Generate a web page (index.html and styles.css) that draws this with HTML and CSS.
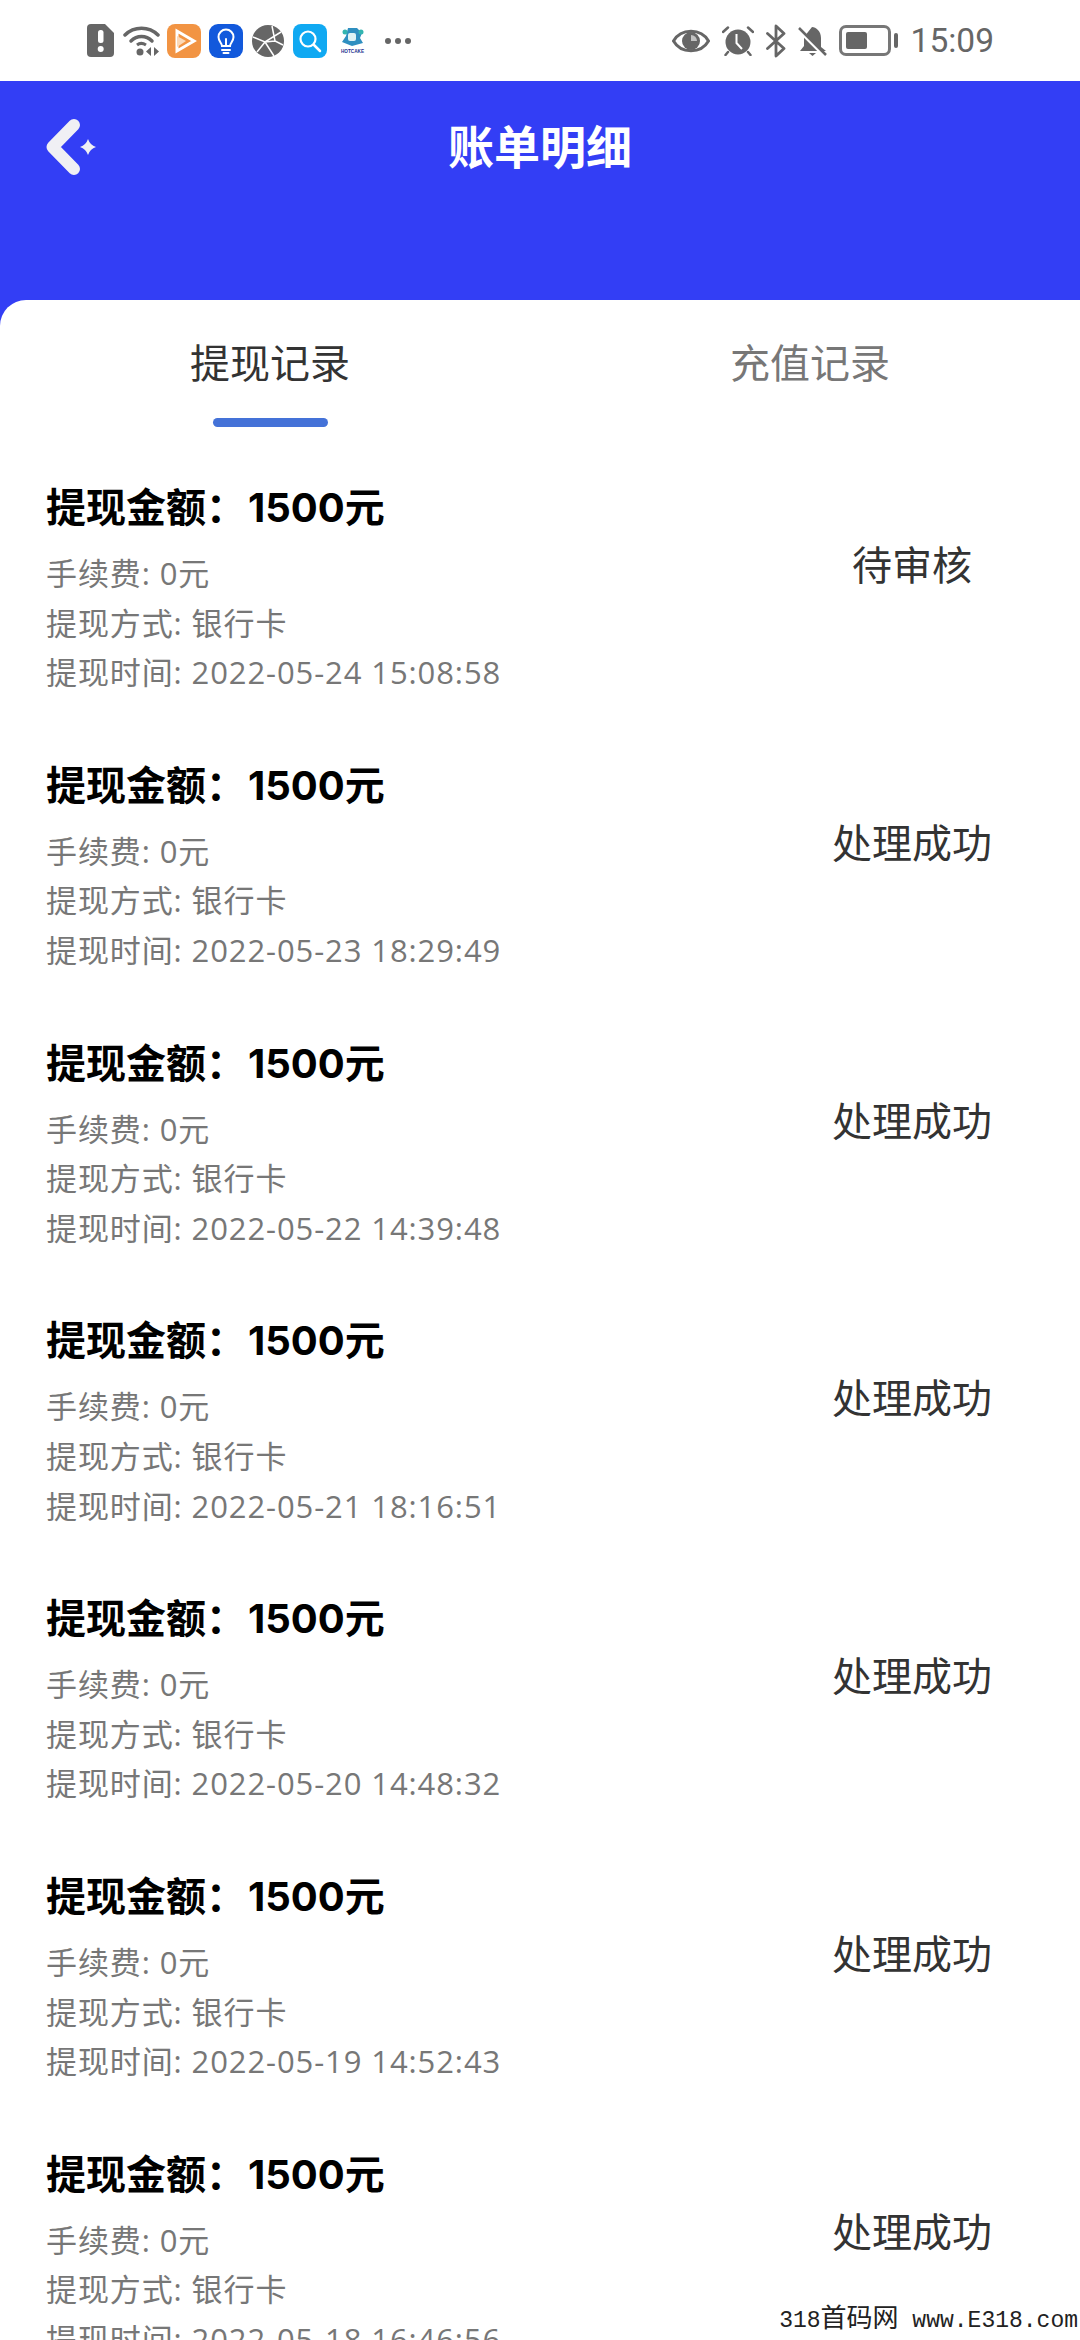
FILE: index.html
```html
<!DOCTYPE html>
<html lang="zh-CN">
<head>
<meta charset="utf-8">
<title>账单明细</title>
<link rel="stylesheet" href="styles.css">
</head>
<body>
<div class="page">
  <div class="statusbar">
    <div class="status-left">
      <span class="cell"><svg width="27" height="33" viewBox="0 0 27 33"><path d="M4 0H18L27 9V29a4 4 0 0 1-4 4H4a4 4 0 0 1-4-4V4a4 4 0 0 1 4-4Z" fill="#666"/><rect x="11" y="6" width="5.500" height="13" rx="2.500" fill="#fff"/><circle cx="13.700" cy="25" r="3" fill="#fff"/></svg></span>
      <span class="cell"><svg width="38" height="33" viewBox="0 0 38 33"><g fill="none" stroke="#666" stroke-width="3.500" stroke-linecap="round"><path d="M2 11C11 2 26 2 35 11"/><path d="M8 17C14 11 23 11 29 17"/></g><path d="M14 21C16.500 19 20 19 23 21" fill="none" stroke="#666" stroke-width="3"/><circle cx="17" cy="28" r="3.500" fill="#666"/><path d="M28 23V32L23 27.500ZM31 23V32L36 27.500Z" fill="#666"/></svg></span>
      <span class="cell"><svg width="34" height="34" viewBox="0 0 34 34"><rect width="34" height="34" rx="8" fill="#f29443"/><path d="M10 7V27L27 17Z" fill="none" stroke="#fff" stroke-width="3"/><path d="M10 12L19 17L10 23Z" fill="#fbd9b8"/></svg></span>
      <span class="cell"><svg width="34" height="34" viewBox="0 0 34 34"><rect width="34" height="34" rx="9" fill="#1259dc"/><path d="M13 22C13 19 9.500 17.500 9.500 13A7.500 7.500 0 0 1 24.500 13C24.500 17.500 21 19 21 22Z" fill="none" stroke="#fff" stroke-width="2"/><path d="M13 26H21M14.500 29H19.500M17 22V15" stroke="#fff" stroke-width="2" stroke-linecap="round"/></svg></span>
      <span class="cell"><svg width="32" height="32" viewBox="0 0 32 32"><circle cx="16" cy="16" r="16" fill="#666"/><path d="M1 12L13 17L29 7M13 17L5 27M13 17L22 31M20 1L23 16L31 20M23 16L13 17" fill="none" stroke="#fff" stroke-width="1.500"/></svg></span>
      <span class="cell"><svg width="34" height="34" viewBox="0 0 34 34"><rect width="34" height="34" rx="8" fill="#10a9f2"/><circle cx="15" cy="15" r="7.500" fill="none" stroke="#fff" stroke-width="2.200"/><path d="M21 21L27 27" stroke="#fff" stroke-width="2.500" stroke-linecap="round"/></svg></span>
      <span class="cell"><svg width="25" height="28" viewBox="0 0 25 28"><path d="M8 1H17L22 6L20 11L23 16L12 19L2 15L6 9Z" fill="#2f8fc0"/><circle cx="5" cy="5" r="2.500" fill="#33b5b0"/><circle cx="21" cy="5" r="2.500" fill="#33b5b0"/><rect x="8" y="6" width="8" height="8" rx="2" fill="#dff3f5"/><text x="12.500" y="26" class="mini" text-anchor="middle" textLength="23" lengthAdjust="spacingAndGlyphs">HOTCAKE</text></svg></span>
      <span class="dots"><i></i><i></i><i></i></span>
    </div>
    <div class="status-right">
      <svg width="38" height="24" viewBox="0 0 38 24"><path d="M1.500 12C9 -1 29 -1 36.500 12C29 25 9 25 1.500 12Z" fill="none" stroke="#666" stroke-width="3"/><circle cx="19" cy="12" r="9" fill="#666"/><path d="M19 6A6 6 0 0 1 25 12H19Z" fill="#fff" opacity=".6"/></svg>
      <svg width="32" height="30" viewBox="0 0 32 30"><circle cx="16" cy="16" r="12.500" fill="#666"/><path d="M14.500 8V17L20 23" fill="none" stroke="#fff" stroke-width="2"/><path d="M1 6L6 1.500M31 6L26 1.500M6 26L3.500 29M26 26L28.500 29" stroke="#666" stroke-width="2.500" stroke-linecap="round"/></svg>
      <svg width="20" height="34" viewBox="0 0 20 34"><path d="M1.500 9.500L18 24.500L10 32V2L18 9.500L1.500 24.500" fill="none" stroke="#666" stroke-width="2.800" stroke-linejoin="round" stroke-linecap="round"/></svg>
      <svg width="29" height="30" viewBox="0 0 29 30"><path d="M14 1C18 1 23 5 23 12V21L28 25H2L6 20V11Z" fill="#666"/><path d="M11 27H18L14.500 30Z" fill="#666"/><path d="M0 3L27 30" stroke="#fff" stroke-width="4"/><path d="M1 2L28 29" stroke="#666" stroke-width="2.500"/></svg>
      <span class="battery"><span class="battery-body"><span class="battery-fill"></span></span><span class="battery-tip"></span></span>
      <span class="time">15:09</span>
    </div>
  </div>
  <div class="hero">
    <header class="appbar">
      <svg class="back" width="60" height="60" viewBox="0 0 60 60"><path d="M31 6L9.500 28L31 50" fill="none" stroke="#f0f0f4" stroke-width="12" stroke-linecap="round" stroke-linejoin="round"/><path d="M45 20Q47 26 53 28Q47 30 45 36Q43 30 37 28Q43 26 45 20Z" fill="#f0f0f4"/></svg>
      <h1 class="title">账单明细</h1>
    </header>
    <main class="card">
      <nav class="tabs">
        <div class="tab active"><span>提现记录</span><i class="indicator"></i></div>
        <div class="tab"><span>充值记录</span></div>
      </nav>
      <section class="list">
        <article class="item"><div class="info"><div class="amount">提现金额&#xFF1A;<span class="num">1500</span>元</div><div class="meta"><p>手续费: 0元</p><p>提现方式: 银行卡</p><p>提现时间: 2022-05-24 15:08:58</p></div></div><div class="state">待审核</div></article>
        <article class="item"><div class="info"><div class="amount">提现金额&#xFF1A;<span class="num">1500</span>元</div><div class="meta"><p>手续费: 0元</p><p>提现方式: 银行卡</p><p>提现时间: 2022-05-23 18:29:49</p></div></div><div class="state">处理成功</div></article>
        <article class="item"><div class="info"><div class="amount">提现金额&#xFF1A;<span class="num">1500</span>元</div><div class="meta"><p>手续费: 0元</p><p>提现方式: 银行卡</p><p>提现时间: 2022-05-22 14:39:48</p></div></div><div class="state">处理成功</div></article>
        <article class="item"><div class="info"><div class="amount">提现金额&#xFF1A;<span class="num">1500</span>元</div><div class="meta"><p>手续费: 0元</p><p>提现方式: 银行卡</p><p>提现时间: 2022-05-21 18:16:51</p></div></div><div class="state">处理成功</div></article>
        <article class="item"><div class="info"><div class="amount">提现金额&#xFF1A;<span class="num">1500</span>元</div><div class="meta"><p>手续费: 0元</p><p>提现方式: 银行卡</p><p>提现时间: 2022-05-20 14:48:32</p></div></div><div class="state">处理成功</div></article>
        <article class="item"><div class="info"><div class="amount">提现金额&#xFF1A;<span class="num">1500</span>元</div><div class="meta"><p>手续费: 0元</p><p>提现方式: 银行卡</p><p>提现时间: 2022-05-19 14:52:43</p></div></div><div class="state">处理成功</div></article>
        <article class="item"><div class="info"><div class="amount">提现金额&#xFF1A;<span class="num">1500</span>元</div><div class="meta"><p>手续费: 0元</p><p>提现方式: 银行卡</p><p>提现时间: 2022-05-18 16:46:56</p></div></div><div class="state">处理成功</div></article>
      </section>
    </main>
  </div>
  <div class="watermark">318<span class="wm-cjk">首码网</span> www.E318.com</div>
</div>
</body>
</html>
```
FILE: styles.css
```css
* { box-sizing: border-box; }
html, body { margin: 0; padding: 0; background: #fff; }
body { font-family: Inter, "Noto Sans CJK SC", sans-serif; }
.page { position: relative; width: 1080px; height: 2340px; overflow: hidden; }

.statusbar { height: 81px; display: flex; justify-content: space-between; align-items: center; padding: 0 86px 0 79px; background: #fff; }
.status-left { display: flex; align-items: center; }
.status-right { display: flex; align-items: center; gap: 12px; }
.cell { width: 42px; display: flex; justify-content: center; align-items: center; }
.cell svg, .status-right svg { display: block; }
.mini { font: 700 6px "Liberation Sans", sans-serif; fill: #23308f; }
.dots { display: flex; gap: 4px; margin-left: 12px; }
.dots i { width: 6px; height: 6px; border-radius: 50%; background: #666; }
.battery { display: flex; align-items: center; gap: 3px; }
.battery-body { width: 52px; height: 31px; border: 3px solid #777; border-radius: 7px; padding: 4px; display: flex; }
.battery-fill { width: 21px; background: #666; border-radius: 2px; }
.battery-tip { width: 4px; height: 15px; background: #666; border-radius: 2px; }
.time { font-family: Roboto, sans-serif; font-size: 33.500px; line-height: 40px; color: #666; margin-left: 1px; }

.hero { background: #333ef5; }
.appbar { height: 219px; position: relative; display: flex; justify-content: center; padding-top: 38px; }
.back { position: absolute; left: 43px; top: 38px; }
.title { margin: 0; font-size: 46px; line-height: 56px; font-weight: 700; color: #fff; }

.card { background: #fff; border-top-left-radius: 26px; height: 2040px; }
.tabs { display: flex; align-items: flex-start; height: 127px; padding-top: 38px; }
.tab { flex: 1; display: flex; flex-direction: column; align-items: center; font-size: 40px; line-height: 50px; color: #777; }
.tab > span { position: relative; top: 1px; }
.tab.active { color: #333; }
.indicator { width: 115px; height: 9px; margin-top: 30px; border-radius: 5px; background: #4472d8; }

.list { display: flex; flex-direction: column; gap: 63px; padding-top: 56px; }
.item { display: flex; justify-content: space-between; align-items: flex-start; padding-left: 46px; }
.amount { font-size: 40px; line-height: 50px; font-weight: 700; color: #000; }
.num { margin-left: 2px; }
.meta { margin-top: 16px; font-family: "Open Sans", "Noto Sans CJK SC", sans-serif; font-size: 31px; letter-spacing: 0.900px; line-height: 49.600px; color: #777; }
.meta p { margin: 0; }
.state { width: 336px; margin-top: 58px; font-size: 40px; line-height: 50px; text-align: center; color: #333; }

.watermark { position: absolute; right: 2px; bottom: 0; height: 40px; padding-left: 6px; background: #fff; font-family: "Liberation Mono", "Noto Sans CJK SC", monospace; font-size: 23px; line-height: 40px; color: #222; white-space: nowrap; }
.wm-cjk { font-size: 26px; }
```
